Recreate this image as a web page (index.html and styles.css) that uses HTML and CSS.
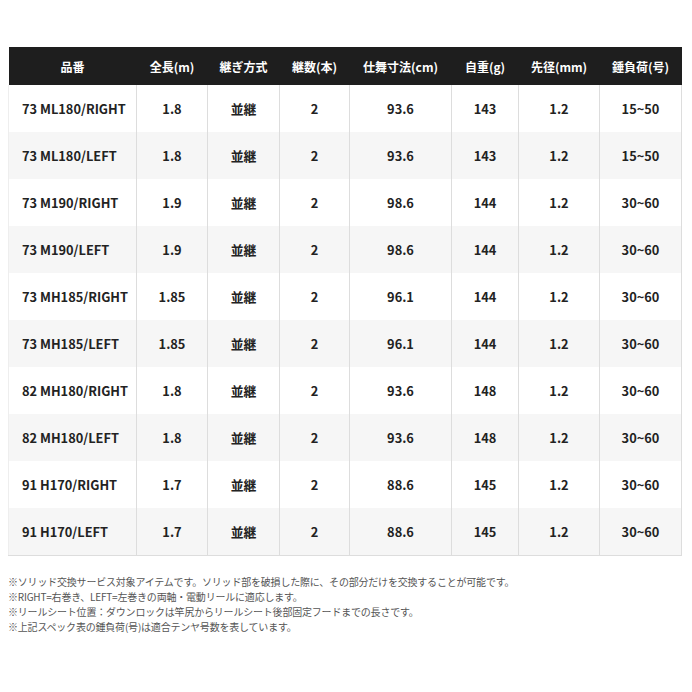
FILE: index.html
```html
<!DOCTYPE html>
<html lang="ja">
<head>
<meta charset="utf-8">
<title>スペック</title>
<link rel="stylesheet" href="styles.css">
</head>
<body>
<div class="page">
<table class="spec">
<colgroup>
<col class="c1"><col class="c2"><col class="c3"><col class="c4"><col class="c5"><col class="c6"><col class="c7"><col class="c8">
</colgroup>
<thead>
<tr><th>品番</th><th>全長(m)</th><th>継ぎ方式</th><th>継数(本)</th><th>仕舞寸法(cm)</th><th>自重(g)</th><th>先径(mm)</th><th>錘負荷(号)</th></tr>
</thead>
<tbody>
<tr><td class="name">73 ML180/RIGHT</td><td>1.8</td><td>並継</td><td>2</td><td>93.6</td><td>143</td><td>1.2</td><td>15~50</td></tr>
<tr><td class="name">73 ML180/LEFT</td><td>1.8</td><td>並継</td><td>2</td><td>93.6</td><td>143</td><td>1.2</td><td>15~50</td></tr>
<tr><td class="name">73 M190/RIGHT</td><td>1.9</td><td>並継</td><td>2</td><td>98.6</td><td>144</td><td>1.2</td><td>30~60</td></tr>
<tr><td class="name">73 M190/LEFT</td><td>1.9</td><td>並継</td><td>2</td><td>98.6</td><td>144</td><td>1.2</td><td>30~60</td></tr>
<tr><td class="name">73 MH185/RIGHT</td><td>1.85</td><td>並継</td><td>2</td><td>96.1</td><td>144</td><td>1.2</td><td>30~60</td></tr>
<tr><td class="name">73 MH185/LEFT</td><td>1.85</td><td>並継</td><td>2</td><td>96.1</td><td>144</td><td>1.2</td><td>30~60</td></tr>
<tr><td class="name">82 MH180/RIGHT</td><td>1.8</td><td>並継</td><td>2</td><td>93.6</td><td>148</td><td>1.2</td><td>30~60</td></tr>
<tr><td class="name">82 MH180/LEFT</td><td>1.8</td><td>並継</td><td>2</td><td>93.6</td><td>148</td><td>1.2</td><td>30~60</td></tr>
<tr><td class="name">91 H170/RIGHT</td><td>1.7</td><td>並継</td><td>2</td><td>88.6</td><td>145</td><td>1.2</td><td>30~60</td></tr>
<tr><td class="name">91 H170/LEFT</td><td>1.7</td><td>並継</td><td>2</td><td>88.6</td><td>145</td><td>1.2</td><td>30~60</td></tr>
</tbody>
</table>
<div class="notes">
<p>※ソリッド交換サービス対象アイテムです。ソリッド部を破損した際に、その部分だけを交換することが可能です。</p>
<p>※RIGHT=右巻き、LEFT=左巻きの両軸・電動リールに適応します。</p>
<p>※リールシート位置：ダウンロックは竿尻からリールシート後部固定フードまでの長さです。</p>
<p>※上記スペック表の錘負荷(号)は適合テンヤ号数を表しています。</p>
</div>
</div>
</body>
</html>
```
FILE: styles.css
```css
html, body {
  margin: 0;
  padding: 0;
  background: #ffffff;
}
.page {
  padding: 47px 8px 0 8px;
  font-family: "Noto Sans CJK JP", "Noto Sans", sans-serif;
}
.spec {
  width: 673px;
  table-layout: fixed;
  border-collapse: collapse;
}
.c1 { width: 128px; }
.c2 { width: 71px; }
.c3 { width: 72px; }
.c4 { width: 70px; }
.c5 { width: 102px; }
.c6 { width: 67px; }
.c7 { width: 81px; }
.c8 { width: 82px; }
.spec th {
  background: #1e1e1e;
  color: #ffffff;
  font-size: 12px;
  font-weight: 700;
  height: 38px;
  padding: 0;
  text-align: center;
  vertical-align: middle;
}
.spec td {
  height: 47px;
  padding: 0;
  font-size: 12.8px;
  font-weight: 700;
  color: #222222;
  text-align: center;
  vertical-align: middle;
  border-left: 1px solid #dddddd;
  border-right: 1px solid #dddddd;
}
.spec td.name {
  text-align: left;
  padding-left: 13px;
  border-left-color: #eeeeee;
}
.spec tbody tr:nth-child(even) td {
  background: #f6f6f6;
}
.spec tbody tr:last-child td {
  border-bottom: 1px solid #dddddd;
}
.notes {
  margin-top: 18px;
  font-size: 10px;
  line-height: 15px;
  letter-spacing: -0.2px;
  color: #555555;
}
.notes p {
  margin: 0;
}
```
